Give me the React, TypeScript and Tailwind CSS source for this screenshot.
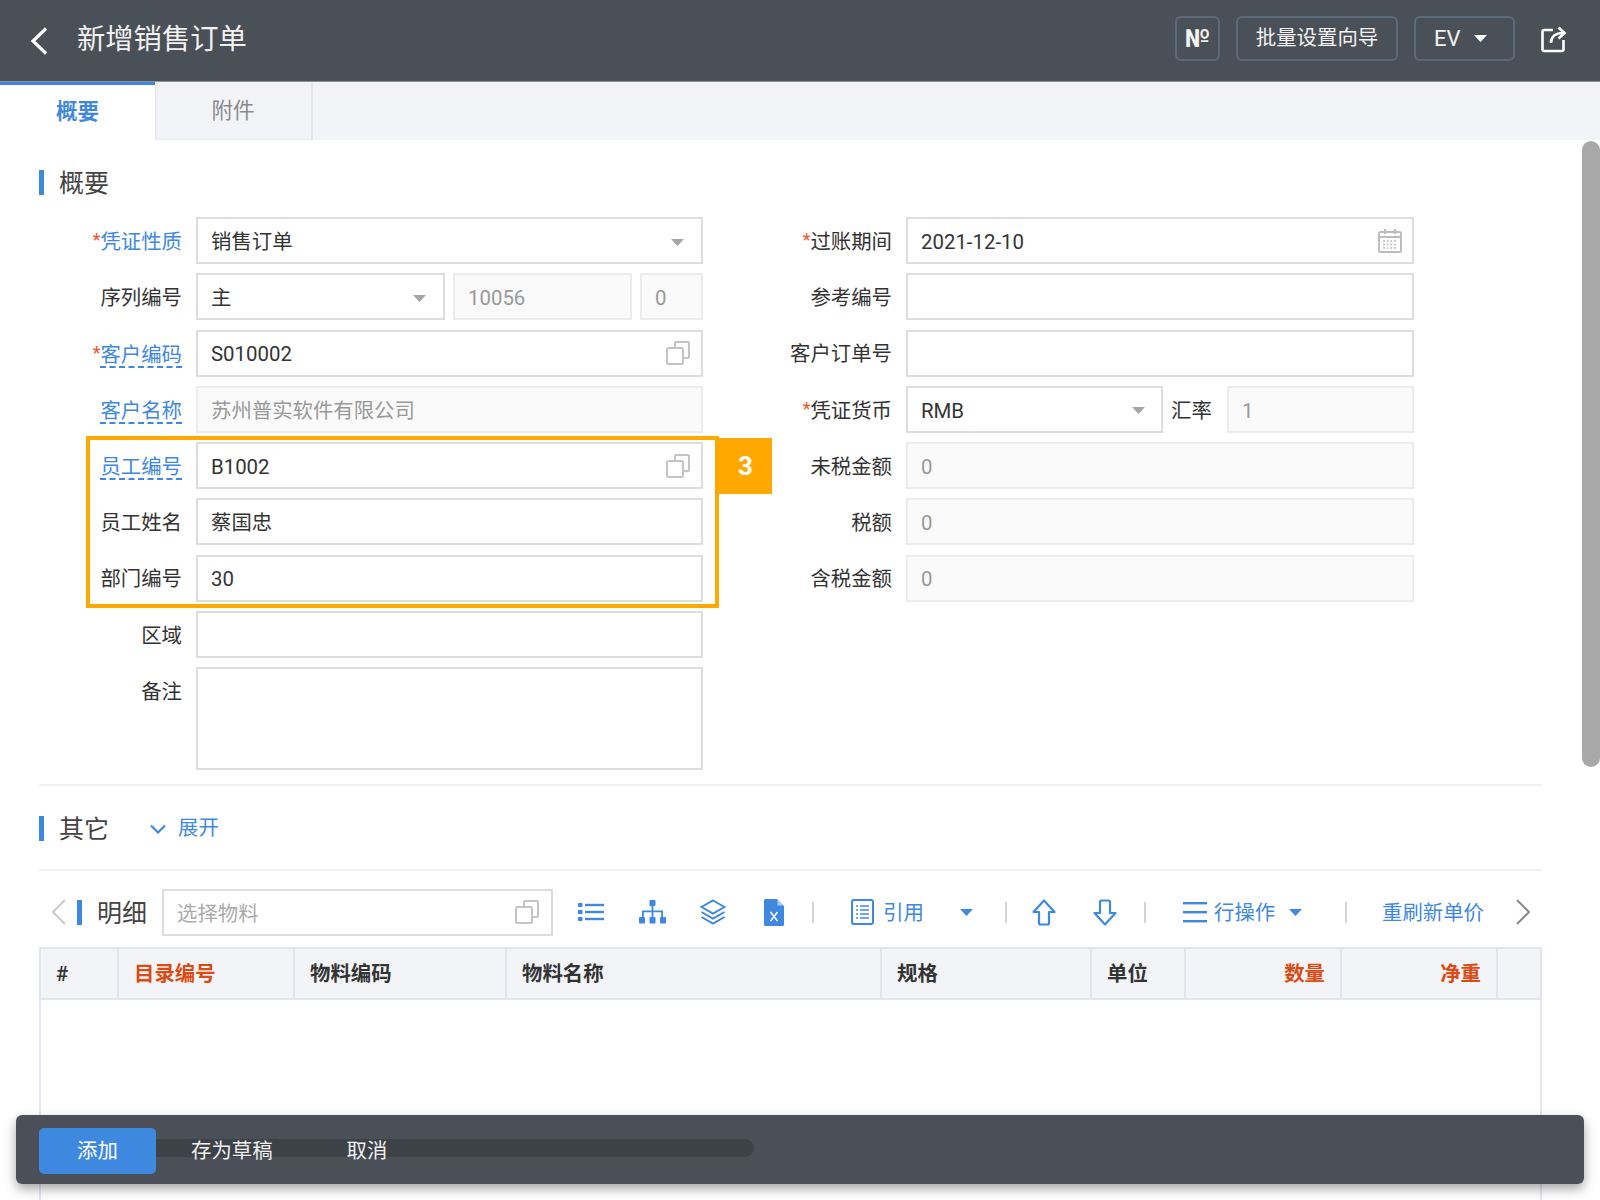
import React from "react";

function CopyIcon() {
  return (
    <svg className="-mt-[3px]" width="26" height="26" viewBox="0 0 26 26" fill="none" stroke="#c4c4c4" strokeWidth="2">
      <path d="M10 7V3a1 1 0 0 1 1-1h12a1 1 0 0 1 1 1v14a1 1 0 0 1-1 1h-4" />
      <rect x="2" y="8" width="16" height="16" rx="1.5" />
    </svg>
  );
}

function Caret({ color = "#a6a6a6", w = 13, h = 7 }: { color?: string; w?: number; h?: number }) {
  return (
    <svg width={w} height={h} viewBox="0 0 13 7">
      <path d="M0 0h13L6.5 7z" fill={color} />
    </svg>
  );
}

function Label({
  text,
  req,
  link,
  wide,
  blue,
}: {
  text: string;
  req?: boolean;
  link?: boolean;
  wide?: boolean;
  blue?: boolean;
}) {
  return (
    <div className={`${wide ? "w-[155px]" : "w-[143px]"} shrink-0 mr-[14px] flex justify-end items-center h-full pt-[3px]`}>
      {req && <span className="text-[#f5522d] text-[18px] leading-none -mt-[4px]">*</span>}
      <span
        className={
          link
            ? "text-[#3f88e0] border-b-2 border-dashed border-[#3f88e0] leading-[22px] mt-[2px]"
            : blue
              ? "text-[#3f88e0]"
              : "text-[#333]"
        }
      >
        {text}
      </span>
    </div>
  );
}

function Box({
  children,
  disabled,
  className = "",
}: {
  children?: React.ReactNode;
  disabled?: boolean;
  className?: string;
}) {
  return (
    <div
      className={`h-full border-2 flex items-center justify-between pl-[13px] pr-[10px] pt-[3px] min-w-0 ${
        disabled ? "bg-[#fafafa] border-[#ececec] text-[#999]" : "bg-white border-[#dddddd] text-[#333]"
      } ${className}`}
    >
      {children}
    </div>
  );
}

function Row({ children }: { children: React.ReactNode }) {
  return <div className="flex items-stretch h-[47px]">{children}</div>;
}

function SectionTitle({ text }: { text: string }) {
  return (
    <div className="flex items-center h-[25px]">
      <div className="w-[5px] h-[25px] bg-[#3f88e0]" />
      <span className="ml-[15px] text-[25px] leading-none text-[#444] pt-[2px]">{text}</span>
    </div>
  );
}

function Sep({ ml }: { ml: string }) {
  return <div className={`w-[2px] h-[21px] bg-[#d4d4d4] shrink-0 ${ml}`} />;
}

function Head({
  w,
  text,
  red,
  right,
}: {
  w: string;
  text?: string;
  red?: boolean;
  right?: boolean;
}) {
  return (
    <div
      className={`${w} shrink-0 h-full flex items-center border-r-2 border-[#e2e5ec] px-[15px] pt-[2px] font-semibold ${
        right ? "justify-end" : ""
      } ${red ? "text-[#dd4a12]" : "text-[#333]"}`}
    >
      {text}
    </div>
  );
}

export default function App() {
  return (
    <div className="relative w-[1600px] h-[1200px] overflow-hidden bg-white font-['Roboto','Noto_Sans_CJK_SC',sans-serif] text-[20.4px] flex flex-col">
      {/* header */}
      <header className="h-[81px] shrink-0 bg-[#4a5058] flex items-center text-[#f2f2f2]">
        <svg className="ml-[30px]" width="18" height="28" viewBox="0 0 18 28" fill="none" stroke="#fff" strokeWidth="3.2">
          <path d="M16 1.5 3 14l13 12.5" />
        </svg>
        <h1 className="ml-[29px] -mt-[1px] text-[28.3px] leading-none font-normal">新增销售订单</h1>
        <div className="ml-auto -mt-[4px] flex items-center h-[45px]">
          <div className="w-[45px] h-full rounded-[6px] border-2 border-[#5c6b7b] flex items-center justify-center font-bold text-[25px]">
            №
          </div>
          <div className="ml-[16px] w-[162px] h-full rounded-[6px] border-2 border-[#5c6b7b] flex items-center justify-center">
            批量设置向导
          </div>
          <div className="ml-[16px] w-[101px] h-full rounded-[6px] border-2 border-[#5c6b7b] flex items-center pl-[18px] text-[22px]">
            EV
            <span className="ml-[13px] flex">
              <Caret color="#fff" />
            </span>
          </div>
          <svg className="ml-[26px] mr-[33px] mt-[1px]" width="26" height="27" viewBox="0 0 26 27" fill="none" stroke="#fff" strokeWidth="2.6">
            <path d="M12 4H3a1.5 1.5 0 0 0-1.5 1.5v18A1.5 1.5 0 0 0 3 25h18a1.5 1.5 0 0 0 1.5-1.5V14" />
            <path d="M10 17c0-6 4-10 12-10" />
            <path d="M17.5 1.5 23.5 7l-6 5.5" />
          </svg>
        </div>
      </header>

      {/* tabs */}
      <nav className="h-[59px] shrink-0 bg-[#f2f4f8] flex border-t border-[#8d939b] text-[21.5px]">
        <div className="w-[155px] bg-white border-t-[3px] border-[#3f88e0] flex items-center justify-center font-semibold text-[#3f88e0]">
          概要
        </div>
        <div className="w-[158px] border-r-2 border-[#e4e6ea] flex items-center justify-center text-[#8a8a8a] shadow-[inset_3px_-2px_3px_-2px_rgba(0,0,0,0.08)]">
          附件
        </div>
      </nav>

      {/* main */}
      <main className="flex-1 min-h-0 pl-[39px] pt-[30px] w-[1542px]">
        <SectionTitle text="概要" />

        <div className="mt-[22px] flex">
          {/* left column */}
          <div className="w-[664px] flex flex-col gap-[9.3px]">
            <Row>
              <Label text="凭证性质" req blue />
              <Box className="flex-1">
                销售订单
                <span className="mr-[7px] flex"><Caret /></span>
              </Box>
            </Row>
            <Row>
              <Label text="序列编号" />
              <Box className="w-[249px] shrink-0">
                主
                <span className="mr-[7px] flex"><Caret /></span>
              </Box>
              <Box disabled className="w-[179px] shrink-0 ml-[8px]">10056</Box>
              <Box disabled className="flex-1 ml-[8px]">0</Box>
            </Row>
            <Row>
              <Label text="客户编码" req link />
              <Box className="flex-1">
                S010002
                <CopyIcon />
              </Box>
            </Row>
            <Row>
              <Label text="客户名称" link />
              <Box disabled className="flex-1">苏州普实软件有限公司</Box>
            </Row>
            <Row>
              <Label text="员工编号" link />
              <Box className="flex-1">
                B1002
                <CopyIcon />
              </Box>
            </Row>
            <Row>
              <Label text="员工姓名" />
              <Box className="flex-1">蔡国忠</Box>
            </Row>
            <Row>
              <Label text="部门编号" />
              <Box className="flex-1">30</Box>
            </Row>
            <Row>
              <Label text="区域" />
              <Box className="flex-1" />
            </Row>
            <div className="flex h-[103px]">
              <div className="w-[143px] mr-[14px] h-[47px]">
                <Label text="备注" />
              </div>
              <Box className="flex-1" />
            </div>
          </div>

          {/* right column */}
          <div className="ml-[34px] w-[677px] flex flex-col gap-[9.3px]">
            <Row>
              <Label text="过账期间" req wide />
              <Box className="flex-1">
                2021-12-10
                <svg className="-mt-[3px]" width="24" height="26" viewBox="0 0 24 26" fill="none" stroke="#bdbdbd" strokeWidth="2">
                  <rect x="1" y="4" width="22" height="20" rx="1.5" />
                  <path d="M1 9h22M7 1v5M17 1v5" />
                  <path d="M5 13h14M5 16.5h14M5 20h14" strokeDasharray="2 1.6" strokeWidth="1.6" />
                </svg>
              </Box>
            </Row>
            <Row>
              <Label text="参考编号" wide />
              <Box className="flex-1" />
            </Row>
            <Row>
              <Label text="客户订单号" wide />
              <Box className="flex-1" />
            </Row>
            <Row>
              <Label text="凭证货币" req wide />
              <Box className="w-[257px] shrink-0">
                RMB
                <span className="mr-[6px] flex"><Caret /></span>
              </Box>
              <div className="w-[64px] shrink-0 flex items-center pl-[8px] pt-[3px] text-[#333]">汇率</div>
              <Box disabled className="flex-1">1</Box>
            </Row>
            <Row>
              <Label text="未税金额" wide />
              <Box disabled className="flex-1">0</Box>
            </Row>
            <Row>
              <Label text="税额" wide />
              <Box disabled className="flex-1">0</Box>
            </Row>
            <Row>
              <Label text="含税金额" wide />
              <Box disabled className="flex-1">0</Box>
            </Row>
          </div>
        </div>

        <div className="mt-[14px] h-[2px] bg-[#f0f0f0]" />

        <div className="mt-[27px] flex items-center">
          <SectionTitle text="其它" />
          <svg className="ml-[41px]" width="16" height="10" viewBox="0 0 16 10" fill="none" stroke="#3f88e0" strokeWidth="2.2">
            <path d="M1 1.5 8 8.5l7-7" />
          </svg>
          <span className="ml-[12px] text-[#3f88e0]">展开</span>
        </div>

        <div className="mt-[25px] h-[2px] bg-[#f0f0f0]" />

        {/* toolbar */}
        <div className="mt-[18px] h-[47px] flex items-center">
          <svg className="ml-[12px] shrink-0" width="15" height="26" viewBox="0 0 15 26" fill="none" stroke="#c9c9c9" strokeWidth="2">
            <path d="M14 1 2 13l12 12" />
          </svg>
          <div className="ml-[11px] w-[5px] h-[25px] bg-[#3f88e0] shrink-0" />
          <span className="ml-[15px] text-[25px] leading-none text-[#444] w-[50px] shrink-0 pt-[2px]">明细</span>
          <div className="ml-[15px] w-[391px] h-full border-2 border-[#dddddd] flex items-center justify-between pl-[13px] pr-[11px] pt-[3px] text-[#aaa] shrink-0">
            选择物料
            <CopyIcon />
          </div>
          <svg className="ml-[25px] shrink-0" width="26" height="20" viewBox="0 0 26 20" fill="#3f88e0">
            <rect x="0" y="1" width="4.5" height="4" rx="0.8" />
            <rect x="0" y="8" width="4.5" height="4" rx="0.8" />
            <rect x="0" y="15" width="4.5" height="4" rx="0.8" />
            <rect x="7" y="1.8" width="19" height="2.4" />
            <rect x="7" y="8.8" width="19" height="2.4" />
            <rect x="7" y="15.8" width="19" height="2.4" />
          </svg>
          <svg className="ml-[35px] shrink-0" width="27" height="24" viewBox="0 0 27 24" fill="#3f88e0">
            <rect x="10.5" y="0" width="6" height="6" rx="1" />
            <rect x="0" y="17" width="6" height="6.5" rx="1" />
            <rect x="10.5" y="17" width="6" height="6.5" rx="1" />
            <rect x="21" y="17" width="6" height="6.5" rx="1" />
            <path d="M12.6 6h1.8v4.5H24v6.5h-1.8v-4.700H14.400V17h-1.800v-4.700H4.800V17H3v-6.500h9.600z" />
          </svg>
          <svg className="ml-[34px] shrink-0" width="26" height="26" viewBox="0 0 26 26" fill="none" stroke="#3f88e0" strokeWidth="2">
            <path d="M13 1.500 24.500 8 13 14.500 1.500 8z" />
            <path d="M1.500 13 13 19.500 24.500 13" />
            <path d="M1.500 18 13 24.500 24.500 18" />
          </svg>
          <svg className="ml-[38px] shrink-0" width="20" height="27" viewBox="0 0 20 27">
            <path d="M1.500 0H13l7 7v18.500a1.500 1.500 0 0 1-1.500 1.500h-17A1.500 1.500 0 0 1 0 25.500v-24A1.500 1.500 0 0 1 1.500 0z" fill="#3f88e0" />
            <path d="M13.500 0.500v6h6" fill="#a9cbf2" />
            <path d="M6.500 13l7 9M13.500 13l-7 9" stroke="#fff" strokeWidth="1.500" />
          </svg>
          <Sep ml="ml-[28px]" />
          <svg className="ml-[37px] shrink-0" width="23" height="26" viewBox="0 0 23 26" fill="none" stroke="#3f88e0" strokeWidth="2">
            <rect x="1" y="1" width="21" height="24" rx="2" />
            <path d="M5 7h2M9 7h9M5 11h2M9 11h9M5 15h2M9 15h9M5 19h2M9 19h9" strokeWidth="1.600" />
          </svg>
          <span className="ml-[9px] text-[#3f88e0] w-[41px] shrink-0 whitespace-nowrap pt-[2px]">引用</span>
          <span className="ml-[36px] flex shrink-0"><Caret color="#3f88e0" /></span>
          <Sep ml="ml-[32px]" />
          <svg className="ml-[25px] shrink-0" width="24" height="27" viewBox="0 0 24 27" fill="none" stroke="#3f88e0" strokeWidth="2.200" strokeLinejoin="round">
            <path d="M12 1.500 22.500 13H17v11a1.500 1.500 0 0 1-1.500 1.500h-7A1.500 1.500 0 0 1 7 24V13H1.500z" />
          </svg>
          <svg className="ml-[37px] shrink-0" width="24" height="27" viewBox="0 0 24 27" fill="none" stroke="#3f88e0" strokeWidth="2.200" strokeLinejoin="round">
            <path d="M12 25.500 1.500 14H7V3a1.500 1.500 0 0 1 1.500-1.500h7A1.500 1.500 0 0 1 17 3v11h5.500z" />
          </svg>
          <Sep ml="ml-[27px]" />
          <svg className="ml-[37px] shrink-0" width="24" height="22" viewBox="0 0 24 22" fill="#3f88e0">
            <rect x="0" y="1" width="24" height="2.400" />
            <rect x="0" y="10" width="24" height="2.400" />
            <rect x="0" y="19" width="24" height="2.400" />
          </svg>
          <span className="ml-[7px] text-[#3f88e0] w-[62px] shrink-0 whitespace-nowrap pt-[2px]">行操作</span>
          <span className="ml-[13px] flex shrink-0"><Caret color="#3f88e0" /></span>
          <Sep ml="ml-[43px]" />
          <span className="ml-[35px] text-[#3f88e0] w-[102px] shrink-0 whitespace-nowrap pt-[2px]">重刷新单价</span>
          <svg className="ml-[32px] shrink-0" width="14" height="26" viewBox="0 0 14 26" fill="none" stroke="#8a8a8a" strokeWidth="2">
            <path d="M1 1l12 12L1 25" />
          </svg>
        </div>

        {/* table */}
        <div className="mt-[11px] w-[1503px] h-[257px] border-x-2 border-b-2 border-[#e4e7ef]">
          <div className="h-[53px] -mx-[2px] bg-[#f2f4f8] border-2 border-[#e2e5ec] flex items-center">
            <Head w="w-[78px]" text="#" />
            <Head w="w-[176px]" text="目录编号" red />
            <Head w="w-[212px]" text="物料编码" />
            <Head w="w-[375px]" text="物料名称" />
            <Head w="w-[210px]" text="规格" />
            <Head w="w-[94px]" text="单位" />
            <Head w="w-[156px]" text="数量" red right />
            <Head w="w-[156px]" text="净重" red right />
          </div>
        </div>
      </main>

      {/* scrollbar */}
      <div className="absolute left-[1582px] top-[141px] w-[18px] h-[626px] rounded-full bg-[#a8a8a8]" />

      {/* highlight */}
      <div className="absolute left-[86px] top-[436px] w-[633px] h-[172px] border-4 border-[#ffa800]" />
      <div className="absolute left-[719px] top-[438px] w-[53px] h-[56px] bg-[#ffa800] flex items-center justify-center text-white font-bold text-[26px]">
        3
      </div>

      {/* footer */}
      <div className="absolute left-[16px] top-[1115px] w-[1568px] h-[69px] rounded-[6px] bg-[#41474f]/95 shadow-[0_5px_12px_rgba(0,0,0,0.35)] flex items-center text-[#f0f0f0]">
        <div className="absolute left-[23px] top-[24px] w-[715px] h-[18px] rounded-full bg-[#3c4248]" />
        <div className="relative ml-[23px] mt-[2px] w-[117px] h-[46px] rounded-[5px] bg-[#3f88e0] flex items-center justify-center text-white pt-[2px]">
          添加
        </div>
        <span className="relative ml-[35px] pt-[3px]">存为草稿</span>
        <span className="relative ml-[74px] pt-[3px]">取消</span>
      </div>
    </div>
  );
}
